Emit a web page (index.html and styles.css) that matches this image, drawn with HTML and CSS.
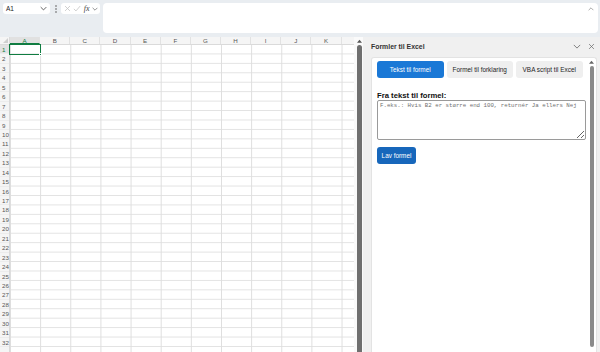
FILE: index.html
```html
<!DOCTYPE html>
<html>
<head>
<meta charset="utf-8">
<link rel="stylesheet" href="styles.css">
</head>
<body>
<div class="app">
  <div class="topbar">
    <div class="namebox">
      <span class="nbtext">A1</span>
      <svg class="chev" width="7" height="5" viewBox="0 0 10 6"><path d="M1 1l4 4 4-4" fill="none" stroke="#555" stroke-width="1.3"/></svg>
    </div>
    <div class="dots">
      <svg width="2" height="8" viewBox="0 0 2 8"><circle cx="1" cy="1" r="0.8" fill="#555"/><circle cx="1" cy="4" r="0.8" fill="#555"/><circle cx="1" cy="7" r="0.8" fill="#555"/></svg>
    </div>
    <div class="fxbox">
      <svg width="7" height="7" viewBox="0 0 10 10"><path d="M1.5 1.5l7 7M8.5 1.5l-7 7" stroke="#c2c2c2" stroke-width="1.1" fill="none"/></svg>
      <svg width="8" height="7" viewBox="0 0 11 10"><path d="M1 5.5l3 3 6-7" stroke="#c2c2c2" stroke-width="1.1" fill="none"/></svg>
      <span class="fx">fx</span>
      <svg width="6" height="4" viewBox="0 0 10 6"><path d="M1 1l4 4 4-4" fill="none" stroke="#777" stroke-width="1.3"/></svg>
    </div>
    <div class="fbar">
      <svg class="caret" width="6" height="4" viewBox="0 0 10 6"><path d="M1 5l4-4 4 4" fill="none" stroke="#888" stroke-width="1.2"/></svg>
    </div>
  </div>
  <div class="main">
    <div class="sheet">
      <div class="colhdr">
        <div class="corner"></div>
        <div class="col selcol">A</div>
        <div class="col">B</div>
        <div class="col">C</div>
        <div class="col">D</div>
        <div class="col">E</div>
        <div class="col">F</div>
        <div class="col">G</div>
        <div class="col">H</div>
        <div class="col">I</div>
        <div class="col">J</div>
        <div class="col">K</div>
        <div class="col"></div>
      </div>
      <div class="sbody">
        <div class="rowhdr">
          <div class="rn selrow">1</div><div class="rn">2</div><div class="rn">3</div><div class="rn">4</div>
          <div class="rn">5</div><div class="rn">6</div><div class="rn">7</div><div class="rn">8</div>
          <div class="rn">9</div><div class="rn">10</div><div class="rn">11</div><div class="rn">12</div>
          <div class="rn">13</div><div class="rn">14</div><div class="rn">15</div><div class="rn">16</div>
          <div class="rn">17</div><div class="rn">18</div><div class="rn">19</div><div class="rn">20</div>
          <div class="rn">21</div><div class="rn">22</div><div class="rn">23</div><div class="rn">24</div>
          <div class="rn">25</div><div class="rn">26</div><div class="rn">27</div><div class="rn">28</div>
          <div class="rn">29</div><div class="rn">30</div><div class="rn">31</div><div class="rn">32</div>
          <div class="rn"></div>
        </div>
        <div class="cells">
          <div class="selbox"><div class="handle"></div></div>
        </div>
      </div>
    </div>
    <div class="vscroll">
      <svg class="sarrow" width="5" height="4" viewBox="0 0 6 4"><path d="M0 4L3 0.5L6 4z" fill="#555"/></svg>
      <div class="thumb"></div>
    </div>
    <div class="pane">
      <div class="ptitle">
        <span class="ptext">Formler til Excel</span>
        <svg class="pchev" width="8" height="5" viewBox="0 0 10 6"><path d="M1 1l4 4 4-4" fill="none" stroke="#666" stroke-width="1"/></svg>
        <svg class="pclose" width="7" height="7" viewBox="0 0 10 10"><path d="M1.5 1.5l7 7M8.5 1.5l-7 7" stroke="#666" stroke-width="1" fill="none"/></svg>
      </div>
      <div class="panel">
        <div class="pcontent">
          <div class="tabs">
            <div class="tab active">Tekst til formel</div>
            <div class="tab">Formel til forklaring</div>
            <div class="tab">VBA script til Excel</div>
          </div>
          <div class="heading">Fra tekst til formel:</div>
          <textarea class="ta" placeholder="F.eks.: Hvis B2 er større end 100, returnér Ja ellers Nej"></textarea>
          <div class="go">Lav formel</div>
        </div>
        <div class="iscroll">
          <svg class="iarrow" width="5" height="4" viewBox="0 0 6 4"><path d="M0 4L3 0.5L6 4z" fill="#666"/></svg>
          <div class="ithumb"></div>
        </div>
      </div>
    </div>
  </div>
</div>
</body>
</html>
```

FILE: styles.css
```css
* { box-sizing: border-box; }
html, body { margin: 0; padding: 0; }
body {
  width: 600px;
  height: 352px;
  overflow: hidden;
  font-family: "Liberation Sans", Arial, sans-serif;
  background: #ffffff;
}
.app {
  width: 600px;
  height: 352px;
  display: flex;
  flex-direction: column;
  overflow: hidden;
}

/* top bar */
.topbar {
  height: 37px;
  flex: 0 0 37px;
  background: #e9edf1;
  display: flex;
  align-items: flex-start;
  padding: 3px 2px 0 3px;
}
.namebox {
  width: 47px;
  height: 11px;
  background: #fff;
  border-radius: 3px;
  display: flex;
  align-items: center;
  justify-content: space-between;
  padding: 0 3px 0 3px;
}
.nbtext { font-size: 6.5px; color: #222; }
.dots {
  width: 11px;
  height: 11px;
  display: flex;
  align-items: center;
  justify-content: center;
}
.fxbox {
  width: 39px;
  height: 11px;
  background: #fff;
  border-radius: 3px;
  display: flex;
  align-items: center;
  justify-content: space-between;
  padding: 0 2px 0 3px;
}
.fx {
  font-family: "Liberation Serif", "Times New Roman", serif;
  font-style: italic;
  font-size: 8px;
  color: #444;
  line-height: 1;
}
.fbar {
  margin-left: 3px;
  width: 495px;
  height: 30px;
  background: #fff;
  border-radius: 4px;
  display: flex;
  justify-content: flex-end;
  align-items: flex-start;
  padding: 4px 4px 0 0;
}

/* main */
.main {
  flex: 1;
  display: flex;
  min-height: 0;
}
.sheet {
  width: 354px;
  flex: 0 0 354px;
  display: flex;
  flex-direction: column;
  overflow: hidden;
  background: #fff;
}
.colhdr {
  height: 8px;
  flex: 0 0 8px;
  display: flex;
  background: #f5f5f5;
  border-bottom: 1px solid #dadada;
}
.corner {
  width: 10px;
  flex: 0 0 10px;
  position: relative;
  border-right: 1px solid #dadada;
  background: #f5f5f5;
}
.corner::after {
  content: "";
  position: absolute;
  right: 1px;
  bottom: 1px;
  border-left: 5px solid transparent;
  border-bottom: 5px solid #cfcfcf;
}
.col {
  width: 30.15px;
  flex: 0 0 30.15px;
  font-size: 6.2px;
  color: #555;
  text-align: center;
  line-height: 8px;
  border-right: 1px solid #e2e2e2;
}
.col.selcol {
  background: #e1e1e1;
  color: #107c41;
  border-bottom: 1px solid #107c41;
}
.sbody {
  flex: 1;
  display: flex;
  min-height: 0;
}
.rowhdr {
  width: 10px;
  flex: 0 0 10px;
  background: #f5f5f5;
  border-right: 1px solid #dadada;
}
.rn {
  height: 9.45px;
  font-size: 6.2px;
  line-height: 9.45px;
  color: #555;
  padding-left: 2px;
  border-bottom: 1px solid #ececec;
}
.rn.selrow {
  background: #e1e1e1;
  color: #107c41;
}
.cells {
  flex: 1;
  position: relative;
  background-color: #fff;
  background-image:
    linear-gradient(to right, #dedede 1px, transparent 1px),
    linear-gradient(to bottom, #e2e2e2 1px, transparent 1px);
  background-size: 30.15px 9.45px;
  background-position: 30.15px -1px, 0 -1px;
}
.selbox {
  position: absolute;
  left: -1px;
  top: -1px;
  width: 31.5px;
  height: 10.9px;
  border: 1px solid #107c41;
}
.handle {
  position: absolute;
  right: -2px;
  bottom: -2px;
  width: 3px;
  height: 3px;
  background: #107c41;
  border: 0.5px solid #fff;
}

/* outer scrollbar */
.vscroll {
  width: 9px;
  flex: 0 0 9px;
  display: flex;
  flex-direction: column;
  align-items: center;
  background: #fafafa;
  padding-left: 1px;
}
.sarrow { margin-top: 2px; flex: 0 0 auto; }
.thumb {
  margin-top: 2px;
  width: 5px;
  flex: 1;
  background: #6f6f6f;
  border-radius: 2.5px 2.5px 0 0;
}

/* task pane */
.pane {
  flex: 1;
  background: #f0f0f0;
  display: flex;
  flex-direction: column;
  padding: 0 3px 0 8px;
  min-width: 0;
}
.ptitle {
  height: 20px;
  flex: 0 0 20px;
  display: flex;
  align-items: center;
  padding-bottom: 1px;
}
.ptext {
  font-size: 6.9px;
  font-weight: 700;
  color: #333;
  flex: 1;
}
.pchev { margin-right: 7px; }
.pclose { margin-right: 2px; }
.panel {
  flex: 1;
  background: #fff;
  border: 1px solid #e3e3e3;
  border-bottom: none;
  border-radius: 3px 3px 0 0;
  display: flex;
  min-height: 0;
}
.pcontent {
  flex: 1;
  padding: 3px 0 0 5px;
  display: flex;
  flex-direction: column;
  align-items: flex-start;
}
.tabs {
  display: flex;
  gap: 3px;
}
.tab {
  width: 66.5px;
  height: 17px;
  border-radius: 3px;
  background: #efefef;
  color: #1e1e1e;
  font-size: 6.4px;
  display: flex;
  align-items: center;
  justify-content: center;
}
.tab.active {
  background: #1a78d6;
  color: #fff;
}
.heading {
  margin-top: 13px;
  font-size: 7.7px;
  font-weight: 700;
  color: #111;
  line-height: 9px;
}
.ta {
  margin: 0;
  width: 209px;
  height: 40px;
  border: 1px solid #9a9a9a;
  border-radius: 2px;
  padding: 1px 2px;
  font-family: "Liberation Mono", "Courier New", monospace;
  font-size: 5.75px;
  line-height: 7px;
  resize: vertical;
  background: #fff;
}
.ta::placeholder { color: #6f6f6f; }
.go {
  margin-top: 7px;
  width: 39px;
  height: 17px;
  border-radius: 3px;
  background: #1767bb;
  color: #fff;
  font-size: 6.4px;
  display: flex;
  align-items: center;
  justify-content: center;
}
.iscroll {
  width: 7px;
  flex: 0 0 7px;
  display: flex;
  flex-direction: column;
  align-items: center;
  margin-right: 1px;
  padding-bottom: 5px;
}
.iarrow { margin-top: 2px; flex: 0 0 auto; }
.ithumb {
  margin-top: 2px;
  width: 4px;
  flex: 1;
  background: #8a8a8a;
  border-radius: 2px;
}
```
